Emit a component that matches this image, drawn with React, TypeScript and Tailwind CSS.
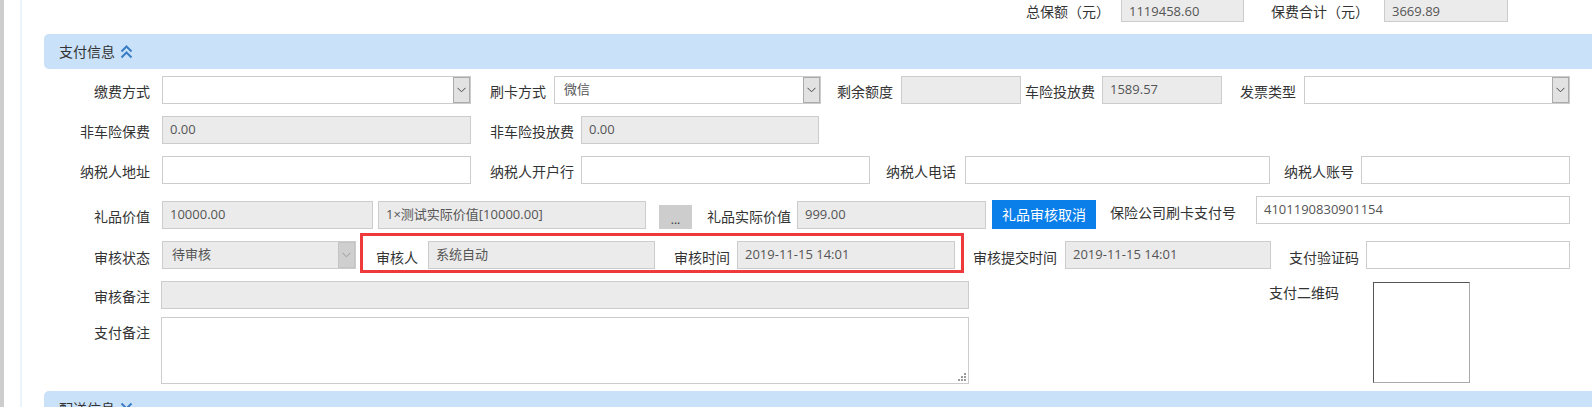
import React from "react";

type P = { c?: string; children?: React.ReactNode };

function Lbl({ c = "", children }: P) {
  return (
    <div className={`shrink-0 text-right text-[14px] leading-[20px] text-[#333] whitespace-nowrap ${c}`}>
      {children}
    </div>
  );
}

function Inp({ c = "", gray, v }: { c?: string; gray?: boolean; v?: string }) {
  return (
    <div
      className={`shrink-0 h-[28px] border border-[#ccc] px-[7px] flex items-center text-[13px] text-[#555] whitespace-nowrap overflow-hidden ${
        gray ? "bg-[#ebebeb]" : "bg-white"
      } ${c}`}
    >
      {v}
    </div>
  );
}

function Chev({ color = "#444" }: { color?: string }) {
  return (
    <svg width="9" height="6" viewBox="0 0 9 6">
      <path d="M0.5 0.8 L4.5 4.8 L8.5 0.8" stroke={color} strokeWidth="1" fill="none" />
    </svg>
  );
}

function Sel({ c = "", v, disabled }: { c?: string; v?: string; disabled?: boolean }) {
  return (
    <div
      className={`shrink-0 h-[28px] border border-[#ccc] flex items-stretch text-[13px] text-[#555] ${
        disabled ? "bg-[#ebebeb]" : "bg-white"
      } ${c}`}
    >
      <div className="flex-1 px-[9px] flex items-center whitespace-nowrap">{v}</div>
      <div
        className={`w-[17px] shrink-0 flex items-center justify-center border ${
          disabled ? "bg-[#cfcfcf] border-[#c4c4c4]" : "bg-[#e2e2e2] border-[#ababab]"
        }`}
      >
        <Chev color={disabled ? "#9a9a9a" : "#444"} />
      </div>
    </div>
  );
}

function DoubleChevron({ down }: { down?: boolean }) {
  return (
    <svg width="13" height="16" viewBox="0 0 13 16">
      {down ? (
        <path d="M1.5 2.5 L6.5 7.5 L11.5 2.5 M1.5 8.5 L6.5 13.5 L11.5 8.5" stroke="#3b7dc4" strokeWidth="2" fill="none" />
      ) : (
        <path d="M1.5 7.5 L6.5 2.5 L11.5 7.5 M1.5 13.5 L6.5 8.5 L11.5 13.5" stroke="#3b7dc4" strokeWidth="2" fill="none" />
      )}
    </svg>
  );
}

function TopInp({ c = "", v }: { c?: string; v: string }) {
  return (
    <div className={`shrink-0 h-[22px] border-x border-b border-[#ccc] bg-[#ebebeb] px-[7px] flex items-center text-[13px] leading-[16px] text-[#555] ${c}`}>
      {v}
    </div>
  );
}

export default function App() {
  return (
    <div className="flex w-[1592px] h-[407px] overflow-hidden bg-white font-['Open_Sans','Noto_Sans_CJK_SC',sans-serif]">
      <div className="w-[4px] shrink-0 bg-[#cdcdcd]" />
      <div className="w-[16px] shrink-0" />
      <div className="w-[2px] shrink-0 bg-[#eaf4fd]" />
      <div className="flex-1 flex flex-col min-w-0">
        {/* top totals */}
        <div className="h-[22px] flex items-start justify-end pr-[84px]">
          <Lbl c="mt-[2px]">总保额（元）</Lbl>
          <TopInp c="ml-[11px] w-[123px]" v="1119458.60" />
          <Lbl c="ml-[27px] mt-[2px]">保费合计（元）</Lbl>
          <TopInp c="ml-[15px] w-[124px]" v="3669.89" />
        </div>

        {/* section header */}
        <div className="mt-[12px] ml-[22px] h-[35px] shrink-0 rounded-l-[5px] bg-[#c9e2f9] flex items-center pl-[15px]">
          <span className="text-[14px] text-[#333]">支付信息</span>
          <span className="ml-[5px] flex items-center">
            <DoubleChevron />
          </span>
        </div>

        {/* row 1 */}
        <div className="mt-[7px] flex items-start">
          <Lbl c="w-[128px] mt-[6px]">缴费方式</Lbl>
          <Sel c="ml-[12px] w-[309px]" />
          <Lbl c="w-[75px] mt-[6px]">刷卡方式</Lbl>
          <Sel c="ml-[8px] w-[267px]" v="微信" />
          <Lbl c="w-[72px] mt-[6px]">剩余额度</Lbl>
          <Inp c="ml-[8px] w-[120px]" gray />
          <Lbl c="w-[74px] mt-[6px]">车险投放费</Lbl>
          <Inp c="ml-[7px] w-[120px]" gray v="1589.57" />
          <Lbl c="w-[74px] mt-[6px]">发票类型</Lbl>
          <Sel c="ml-[8px] w-[266px]" />
        </div>

        {/* row 2 */}
        <div className="mt-[12px] flex items-start">
          <Lbl c="w-[128px] mt-[6px]">非车险保费</Lbl>
          <Inp c="ml-[12px] w-[309px]" gray v="0.00" />
          <Lbl c="w-[103px] mt-[6px]">非车险投放费</Lbl>
          <Inp c="ml-[7px] w-[238px]" gray v="0.00" />
        </div>

        {/* row 3 */}
        <div className="mt-[12px] flex items-start">
          <Lbl c="w-[128px] mt-[6px]">纳税人地址</Lbl>
          <Inp c="ml-[12px] w-[309px]" />
          <Lbl c="w-[103px] mt-[6px]">纳税人开户行</Lbl>
          <Inp c="ml-[7px] w-[289px]" />
          <Lbl c="w-[86px] mt-[6px]">纳税人电话</Lbl>
          <Inp c="ml-[9px] w-[305px]" />
          <Lbl c="w-[84px] mt-[6px]">纳税人账号</Lbl>
          <Inp c="ml-[7px] w-[209px]" />
        </div>

        {/* row 4 */}
        <div className="mt-[12px] h-[33px] flex items-start">
          <Lbl c="w-[128px] mt-[11px]">礼品价值</Lbl>
          <Inp c="ml-[12px] w-[211px] mt-[5px]" gray v="10000.00" />
          <Inp c="ml-[5px] w-[268px] mt-[5px]" gray v="1×测试实际价值[10000.00]" />
          <div className="ml-[13px] mt-[9px] w-[33px] h-[24px] shrink-0 bg-[#cdcdcd] flex items-end justify-center pb-[3px] text-[12px] leading-[12px] text-[#333]">
            ...
          </div>
          <Lbl c="w-[99px] mt-[11px]">礼品实际价值</Lbl>
          <Inp c="ml-[6px] w-[189px] mt-[5px]" gray v="999.00" />
          <div className="ml-[6px] mt-[4px] w-[104px] h-[29px] shrink-0 bg-[#0b7fe9] text-white text-[14px] flex items-center justify-center">
            礼品审核取消
          </div>
          <Lbl c="w-[140px] mt-[7px]">保险公司刷卡支付号</Lbl>
          <Inp c="ml-[20px] w-[314px]" v="4101190830901154" />
        </div>

        {/* row 5 */}
        <div className="mt-[4px] h-[40px] flex items-start">
          <Lbl c="w-[128px] mt-[15px]">审核状态</Lbl>
          <Sel c="ml-[12px] w-[194px] mt-[8px]" v="待审核" disabled />
          <div className="ml-[4px] w-[604px] h-[40px] shrink-0 border-[3px] border-[#ee3a3a] flex items-start">
            <Lbl c="w-[55px] mt-[12px]">审核人</Lbl>
            <Inp c="ml-[10px] w-[227px] mt-[5px]" gray v="系统自动" />
            <Lbl c="w-[75px] mt-[12px]">审核时间</Lbl>
            <Inp c="ml-[7px] w-[218px] mt-[5px]" gray v="2019-11-15 14:01" />
          </div>
          <Lbl c="w-[93px] mt-[15px]">审核提交时间</Lbl>
          <Inp c="ml-[8px] w-[206px] mt-[8px]" gray v="2019-11-15 14:01" />
          <Lbl c="w-[88px] mt-[15px]">支付验证码</Lbl>
          <Inp c="ml-[7px] w-[204px] mt-[8px]" />
        </div>

        {/* rows 6-7 */}
        <div className="mt-[8px] flex items-start">
          <div className="flex flex-col shrink-0">
            <div className="flex items-start">
              <Lbl c="w-[128px] mt-[6px]">审核备注</Lbl>
              <Inp c="ml-[11px] w-[808px]" gray />
            </div>
            <div className="mt-[8px] flex items-start">
              <Lbl c="w-[128px] mt-[6px]">支付备注</Lbl>
              <div className="relative ml-[11px] w-[808px] h-[67px] shrink-0 border border-[#ccc] bg-white">
                <svg className="absolute right-[2px] bottom-[2px]" width="8" height="8" viewBox="0 0 8 8">
                  <rect x="6" y="0" width="2" height="2" fill="#9a9a9a" />
                  <rect x="3" y="3" width="2" height="2" fill="#9a9a9a" />
                  <rect x="6" y="3" width="2" height="2" fill="#9a9a9a" />
                  <rect x="0" y="6" width="2" height="2" fill="#9a9a9a" />
                  <rect x="3" y="6" width="2" height="2" fill="#9a9a9a" />
                  <rect x="6" y="6" width="2" height="2" fill="#9a9a9a" />
                </svg>
              </div>
            </div>
          </div>
          <Lbl c="ml-[300px] mt-[2px]">支付二维码</Lbl>
          <div className="ml-[34px] mt-[1px] w-[97px] h-[101px] shrink-0 border border-t-[#555] border-l-[#555] border-r-[#aaa] border-b-[#aaa] bg-white" />
        </div>

        {/* next section header */}
        <div className="mt-[7px] ml-[22px] h-[35px] shrink-0 rounded-l-[5px] bg-[#c9e2f9] flex items-center pl-[15px]">
          <span className="text-[14px] text-[#333]">配送信息</span>
          <span className="ml-[5px] flex items-center">
            <DoubleChevron down />
          </span>
        </div>
      </div>
    </div>
  );
}
